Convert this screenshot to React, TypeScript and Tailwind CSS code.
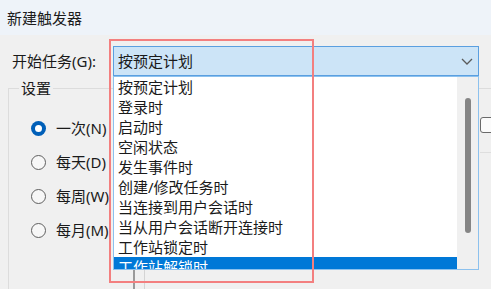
import React from "react";

const items = [
  "按预定计划",
  "登录时",
  "启动时",
  "空闲状态",
  "发生事件时",
  "创建/修改任务时",
  "当连接到用户会话时",
  "当从用户会话断开连接时",
  "工作站锁定时",
  "工作站解锁时",
];

const radios = [
  { label: "一次(N)", checked: true },
  { label: "每天(D)", checked: false },
  { label: "每周(W)", checked: false },
  { label: "每月(M)", checked: false },
];

function Radio({ checked }: { checked: boolean }) {
  return checked ? (
    <span className="w-[15px] h-[15px] rounded-full bg-[#005fb8] flex items-center justify-center shrink-0">
      <span className="w-[7px] h-[7px] rounded-full bg-white" />
    </span>
  ) : (
    <span className="w-[15px] h-[15px] rounded-full border border-[#5f5f5f] bg-[#f7f7f7] shrink-0" />
  );
}

export default function App() {
  const font = {
    fontFamily: '"Noto Sans", "Noto Sans CJK SC", sans-serif',
  };
  return (
    <div
      className="relative w-[491px] h-[289px] overflow-hidden bg-[#f0f0f0] text-[15px] leading-[20px] text-[#1a1a1a]"
      style={font}
    >
      {/* title bar */}
      <div className="h-[35px] bg-[#eef3f9] flex items-center pl-[7px]">
        <span className="text-[15px] text-[#1c1c1c]">新建触发器</span>
      </div>

      {/* start task row */}
      <div className="flex items-center mt-[11px] pl-[12px]">
        <span className="w-[101px] shrink-0">开始任务(G):</span>
        <div className="w-[366px] h-[30px] bg-[#cce4f7] border border-[#5a9fe0] flex items-center pl-[4px] pr-[5px]">
          <span className="flex-1">按预定计划</span>
          <svg width="12" height="7" viewBox="0 0 12 7" className="mr-[0px]">
            <path d="M1 1 L6 6 L11 1" fill="none" stroke="#5a5a5a" strokeWidth="1.3" />
          </svg>
        </div>
      </div>

      {/* group box */}
      <div className="mt-[12px] ml-[8px] border-t border-l border-[#dcdcdc] h-[220px] flex">
        <div className="w-[471px] shrink-0 flex flex-col">
          <span className="-mt-[11px] ml-[10px] self-start px-[2px] bg-[#f0f0f0]">设置</span>
          <div className="flex flex-col gap-[14px] mt-[20px] pl-[22px]">
            {radios.map((r) => (
              <div key={r.label} className="flex items-center h-[20px] gap-[10px]">
                <Radio checked={r.checked} />
                <span>{r.label}</span>
              </div>
            ))}
          </div>
          <div className="ml-[124px] mt-[20px] w-[12px] h-[30px] border-l-2 border-l-[#9a9a9a] border-r border-r-[#d4d4d4]" />
        </div>
        <div className="flex flex-col">
          <div className="mt-[28px] w-[16px] h-[16px] rounded-[3px] border border-[#6a6a6a] bg-[#fbfbfb]" />
          <div className="mt-[19px] w-[20px] border-t border-[#dedede]" />
        </div>
      </div>

      {/* dropdown list (overlay) */}
      <div className="absolute left-[113px] top-[76px] w-[366px] h-[194px] border border-[#8cc1ee] bg-white flex">
        <div className="flex-1 overflow-hidden flex flex-col">
          {items.map((it, i) => (
            <div
              key={it}
              className={
                "h-[20px] shrink-0 pl-[4px] whitespace-nowrap " +
                (i === 9 ? "bg-[#0078d7] text-white" : "")
              }
            >
              {it}
            </div>
          ))}
        </div>
        <div className="w-[21px] bg-[#f0f0f0] flex justify-center">
          <div className="mt-[21px] ml-[1px] w-[6px] h-[135px] rounded-[3px] bg-[#858585]" />
        </div>
      </div>

      {/* red annotation box */}
      <div className="absolute left-[109px] top-[39px] w-[205px] h-[244px] border-2 border-[#f37f7f] pointer-events-none" />
    </div>
  );
}
